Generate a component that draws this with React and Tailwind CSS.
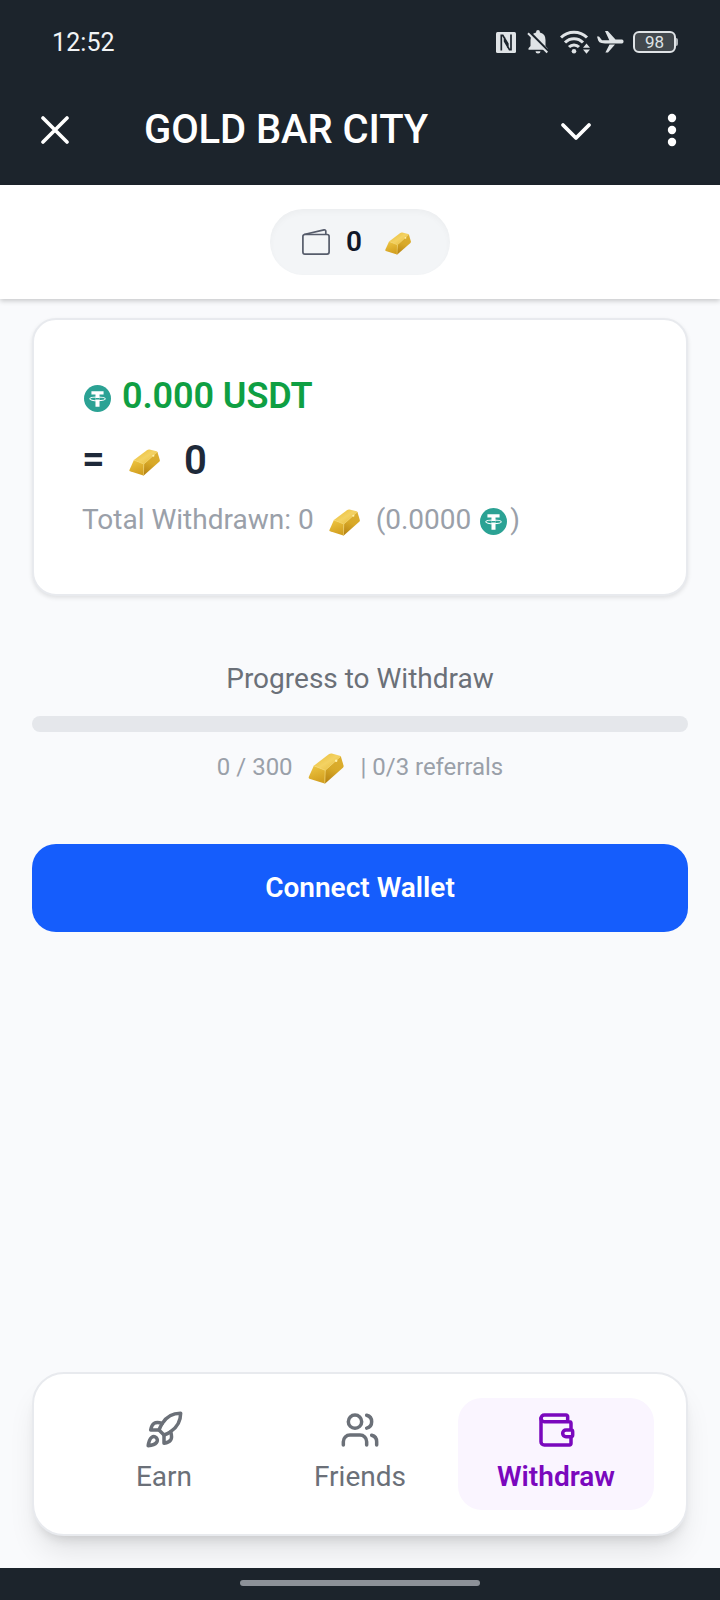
import React, { useState } from 'react';
import { Rocket, Users, Wallet } from 'lucide-react';

const tabs = [
  { id: 'earn', label: 'Earn', icon: Rocket },
  { id: 'friends', label: 'Friends', icon: Users },
  { id: 'withdraw', label: 'Withdraw', icon: Wallet },
];

const GoldBar = ({ className }) => (
  <svg viewBox="0 0 32 28" className={className}>
    <defs>
      <linearGradient id="goldTop" x1="0" y1="0" x2="1" y2="1">
        <stop offset="0" stopColor="#e9b92f" />
        <stop offset="0.5" stopColor="#f3d263" />
        <stop offset="1" stopColor="#e6b62f" />
      </linearGradient>
      <linearGradient id="goldSide" x1="0.7" y1="0" x2="0.4" y2="1">
        <stop offset="0" stopColor="#dcae30" />
        <stop offset="0.5" stopColor="#d8a928" />
        <stop offset="1" stopColor="#b98614" />
      </linearGradient>
      <linearGradient id="goldFront" x1="0" y1="0" x2="0.3" y2="1">
        <stop offset="0" stopColor="#efc744" />
        <stop offset="1" stopColor="#d3a020" />
      </linearGradient>
    </defs>
    <path d="M5 11.5 18.8 1Q20 .2 21.2.5L28.6 2.400Q29.6 2.8 29.4 4L15.3 16Z" fill="url(#goldTop)" />
    <path d="M29.4 3 31.9 11.5Q32.1 12.5 31.3 13.3L15.5 27.3Q14.3 28 14.3 26.5L15.3 15.6Z" fill="url(#goldSide)" />
    <path d="M5 11.5 15.3 15.6 14.8 27.6 1 23.2Q0 22.8.4 21.7Z" fill="url(#goldFront)" />
    <path d="M5 11.5 15.3 15.6 29 3.3M15.3 15.6 14.9 27" fill="none" stroke="#f7dc7c" strokeWidth="0.6" />
    <circle cx="25.2" cy="7" r="1.1" fill="#fff0a8" />
  </svg>
);

const Usdt = ({ className }) => (
  <svg viewBox="0 0 32 32" className={className}>
    <circle cx="16" cy="16" r="16" fill="#2ba294" />
    <path d="M8.8 7.3h14.4v3.9h-4.8v14.5h-4.8V11.2H8.8Z" fill="#fff" />
    <path d="M13.6 15.4h4.8v1.8h-4.800Z" fill="#2ba294" />
    <ellipse cx="16" cy="16.4" rx="9.2" ry="2.3" fill="none" stroke="#fff" strokeWidth="1.2" />
  </svg>
);

const StatusBar = () => (
  <div className="flex h-[84px] items-center justify-between pl-[52px] pr-[42px] text-[#dfe3e6]">
    <span className="pt-px text-[25px] tracking-[0.1px] text-[#f1f4f6]">12:52</span>
    <div className="flex items-center">
      <svg viewBox="0 0 20 21" className="h-[21px] w-5">
        <rect width="20" height="21" rx="1.5" fill="currentColor" />
        <path d="M5.3 18.5V3.3h1.500l5 8.500v4M15 2.500v15.200h-1.500L8.600 9.200V5.500" fill="none" stroke="#1c242c" strokeWidth="1.700" />
      </svg>
      <svg viewBox="0 0 22 24" className="ml-[11px] h-6 w-[22px]">
        <path d="M3.5 10a7.5 7.5 0 0 1 5.6-7.4V2a1.9 1.9 0 0 1 3.8 0v.6A7.5 7.5 0 0 1 18.5 10v6l2 2.3v1.4H1.5v-1.4l2-2.3Z" fill="currentColor" />
        <path d="M8.5 21.3h5a2.5 2.2 0 0 1-5 0" fill="currentColor" />
        <path d="M2.3 2 22 21.8" stroke="#1c242c" strokeWidth="2.6" />
        <path d="M1 3.2 20.3 22.5" stroke="currentColor" strokeWidth="2" />
      </svg>
      <svg viewBox="0 0 30 24" className="ml-[11px] h-6 w-[30px]" fill="none" stroke="currentColor" strokeWidth="3">
        <path d="M1 7.5a18.5 18.5 0 0 1 26 0M5 12.5a12.5 12.5 0 0 1 18 0M9 17a7 7 0 0 1 10 0" />
        <circle cx="14" cy="21.3" r="2.3" fill="currentColor" stroke="none" />
        <path d="m26.5 13.5 3.5 4.2h-7ZM26.5 23.7l3.5-4.200h-7Z" fill="currentColor" stroke="none" />
      </svg>
      <svg viewBox="0 0 27 22" className="ml-[7px] h-[22px] w-[27px]">
        <path d="M0 5.5h2l3 3.700h7.300L8 0h2.800l7.700 8.600h6.700a2 2 0 0 1 0 3.800H8L4.500 12Q2 11.600 1.200 9.500ZM12.500 13.400h5.500L11 21.500H8.400Z" fill="currentColor" />
      </svg>
      <div className="ml-[9px] flex h-[22px] w-[43px] items-center justify-center rounded-[6px] border-2 border-current bg-[#42484d] text-[17px] leading-none">
        98
      </div>
      <div className="h-2 w-0.5 rounded-r bg-[#aeb3b7]" />
    </div>
  </div>
);

const TitleBar = () => (
  <div className="flex h-[101px] items-center pb-[10px] pl-[41px] pr-[43px]">
    <svg viewBox="0 0 28 28" className="mt-px size-7" fill="none" stroke="#fff" strokeWidth="3.6" strokeLinecap="round">
      <path d="m2 2 24 24M26 2 2 26" />
    </svg>
    <h1 className="ml-[75px] flex-1 pt-px text-[40px] font-medium leading-none tracking-[-0.1px] text-white">
      GOLD BAR CITY
    </h1>
    <svg viewBox="0 0 32 20" className="mt-[5px] h-5 w-8" fill="none" stroke="#fff" strokeWidth="3.8" strokeLinecap="round" strokeLinejoin="round">
      <path d="m3 3 13 13L29 3" />
    </svg>
    <svg viewBox="0 0 10 34" className="ml-[75px] mt-px h-[34px] w-2.5" fill="#fff">
      <circle cx="5" cy="5" r="4.2" />
      <circle cx="5" cy="17" r="4.2" />
      <circle cx="5" cy="29" r="4.2" />
    </svg>
  </div>
);

const App = () => {
  const [activeTab, setActiveTab] = useState('withdraw');
  const balance = 0;
  const referrals = 0;
  const progress = (balance / 300) * 100;

  return (
    <div className="flex h-[1600px] w-[720px] flex-col overflow-hidden bg-[#f9fafc] font-['Roboto',sans-serif]">
      <div className="h-[185px] shrink-0 bg-[#1c242c]">
        <StatusBar />
        <TitleBar />
      </div>

      {/* Balance */}
      <div className="flex h-[114px] shrink-0 items-center justify-center bg-white shadow-[0_2px_5px_rgba(0,0,0,0.2)]">
        <div className="flex h-[66px] w-[180px] items-center rounded-full bg-[#f3f5f7] pl-8 shadow-[inset_0_3px_6px_rgba(0,0,0,0.03)]">
          <svg viewBox="0 0 28 26" className="h-[26px] w-7" fill="none" stroke="#565c6b" strokeWidth="1.7" strokeLinejoin="round">
            <rect x="0.9" y="5.5" width="26.2" height="19.6" rx="2" />
            <path d="M2 5.5 22 .9q1.8-.3 1.8 1.3v3.3" />
          </svg>
          <span className="ml-4 text-[28px] font-semibold leading-none text-[#101828]">{balance}</span>
          <GoldBar className="ml-[23px] mt-[3px] h-[23px] w-[26px]" />
        </div>
      </div>

      <main className="flex flex-1 flex-col px-8 pt-[19px]">
        <div className="h-[278px] rounded-[24px] border-2 border-[#e8eaee] bg-white px-12 pt-[48px] shadow-[0_2px_4px_rgba(0,0,0,0.1)]">
          <div className="flex h-14 items-center">
            <Usdt className="ml-0.5 mt-1 size-[27px]" />
            <span className="ml-[11px] text-[36px] font-semibold leading-none tracking-[-0.1px] text-[#0f9f43]">0.000 USDT</span>
          </div>
          <div className="mt-2 flex h-14 items-center text-[40px] font-semibold leading-none text-[#1e2939]">
            <span className="w-[47px]">=</span>
            <GoldBar className="mt-1 h-[27px] w-[31px]" />
            <span className="ml-6 pt-0.5">{balance}</span>
          </div>
          <div className="mt-1 flex h-14 items-center text-[28px] leading-none text-[#9aa0a9]">
            <span>Total Withdrawn: 0</span>
            <GoldBar className="ml-[15px] mt-1 h-[27px] w-[31px]" />
            <span className="ml-4">(0.0000</span>
            <Usdt className="ml-[9px] mt-[3px] size-[27px]" />
            <span className="ml-[3px]">)</span>
          </div>
        </div>

        {/* Progress */}
        <div className="mt-[63px] flex flex-col items-center">
          <p className="text-[28px] leading-10 text-[#6b7078]">Progress to Withdraw</p>
          <div className="mt-[17px] h-4 w-full overflow-hidden rounded-full bg-gray-200">
            <div className="h-full bg-blue-500" style={{ width: `${progress}%` }} />
          </div>
          <div className="mt-[15px] flex h-10 items-center text-[24px] leading-none text-[#9aa0a9]">
            <span>{balance} / 300</span>
            <GoldBar className="ml-[15px] mr-px mt-[3px] h-[31px] w-9" />
            <span className="ml-4 tracking-[-0.04px]">| {referrals}/3 referrals</span>
          </div>
        </div>

        <button className="mt-[57px] h-[88px] w-full rounded-[24px] bg-[#155dfc] pb-px text-[28px] font-semibold text-white">
          Connect Wallet
        </button>

        <nav className="mb-8 mt-auto grid h-[164px] grid-cols-3 items-center rounded-[32px] border-2 border-[#e8eaee] bg-white px-8 shadow-[0_20px_30px_-6px_rgba(0,0,0,0.1),0_8px_12px_-6px_rgba(0,0,0,0.14)]">
          {tabs.map(({ id, label, icon: Icon }) => (
            <button
              key={id}
              onClick={() => setActiveTab(id)}
              className={`flex h-[112px] flex-col items-center rounded-[24px] pt-3 text-[28px] leading-10 ${
                activeTab === id ? 'bg-[#faf5ff] font-semibold text-[#7a08bd]' : 'text-[#6b7078]'
              }`}
            >
              <Icon size={40} strokeWidth={2.1} />
              <span className="mt-[7px]">{label}</span>
            </button>
          ))}
        </nav>
      </main>

      <div className="flex h-8 shrink-0 items-start justify-center bg-[#1c242c] pt-3">
        <div className="h-1.5 w-60 rounded-full bg-[#8c9198]" />
      </div>
    </div>
  );
};

export default App;
